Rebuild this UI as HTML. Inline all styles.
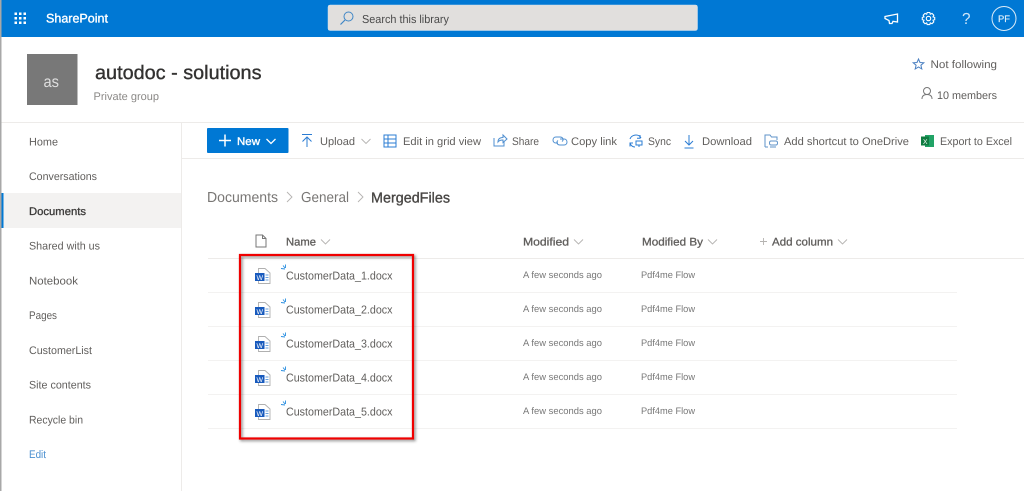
<!DOCTYPE html>
<html><head><meta charset="utf-8"><title>SharePoint</title>
<style>
html,body{margin:0;padding:0;background:#fff;width:1024px;height:491px;overflow:hidden}
svg{display:block;filter:blur(.35px)}
text{font-family:"Liberation Sans",sans-serif;font-size:11px;fill:#605e5c;dominant-baseline:alphabetic;text-rendering:geometricPrecision}
.s{font-size:9.500px;fill:#777}
.h{fill:#605e5c;font-size:11px;stroke:#605e5c;stroke-width:.3px}
.f{fill:#605e5c;font-size:11.500px}
.ic{fill:none;stroke:#2b7cd3;stroke-width:1}
.g{fill:none;stroke:#b5b3b1;stroke-width:.9}
.w{fill:none;stroke:#fff;stroke-width:1}
</style></head><body>
<svg width="1024" height="491" viewBox="0 0 1024 491" xmlns="http://www.w3.org/2000/svg">
<rect width="1024" height="491" fill="#fff"/>
<rect x="0" y="0" width="1.5" height="491" fill="#a8a8a8"/>
<rect x="1.500" y="0" width="1022.500" height="37" fill="#0078d4"/>
<g fill="#fff"><rect x="14.500" y="12.500" width="2.500" height="2.500"/><rect x="19" y="12.500" width="2.500" height="2.500"/><rect x="23.500" y="12.500" width="2.500" height="2.500"/><rect x="14.500" y="17" width="2.500" height="2.500"/><rect x="19" y="17" width="2.500" height="2.500"/><rect x="23.500" y="17" width="2.500" height="2.500"/><rect x="14.500" y="21.500" width="2.500" height="2.500"/><rect x="19" y="21.500" width="2.500" height="2.500"/><rect x="23.500" y="21.500" width="2.500" height="2.500"/></g>
<text x="46" y="22.500" textLength="62" lengthAdjust="spacingAndGlyphs" style="font-size:12.500px;fill:#fff;stroke:#fff;stroke-width:.35px">SharePoint</text>
<rect x="328" y="5" width="369.500" height="25.500" rx="2" fill="#e1dfdd" stroke="#cfe0ee" stroke-width=".5"/>
<circle cx="348.500" cy="16.500" r="4.500" fill="none" stroke="#3f86c6" stroke-width="1"/><path d="M345 20L340.500 24.500" stroke="#3f86c6" stroke-width="1.200" fill="none"/>
<text x="362" y="23" textLength="87" lengthAdjust="spacingAndGlyphs" style="fill:#4a4a4a;font-size:11.500px">Search this library</text>
<path d="M885 16.500L897.500 14V22L893 21.300 892 23.500H889.500L889 20.500 885 18.500Z" fill="none" stroke="#fff" stroke-width="1.300"/>
<g fill="none" stroke="#fff" stroke-width="1.100"><circle cx="928.500" cy="18.500" r="2.200"/><path d="M927.200 12.500H929.800L930.300 14.200 932 13.400 933.800 15.200 933 16.900 934.700 17.400V19.700L933 20.200 933.800 21.900 932 23.700 930.300 22.900 929.800 24.600H927.200L926.700 22.900 925 23.700 923.200 21.900 924 20.200 922.300 19.700V17.400L924 16.900 923.200 15.200 925 13.400 926.700 14.200Z"/></g>
<text x="962" y="24" textLength="8.500" lengthAdjust="spacingAndGlyphs" style="font-size:16px;fill:#cfe6f8">?</text>
<circle cx="1004" cy="18.500" r="12" fill="none" stroke="#dcecf8" stroke-width="1"/>
<text x="998" y="22" textLength="12" lengthAdjust="spacingAndGlyphs" style="font-size:9.500px;fill:#e8f3fb;stroke:#e8f3fb;stroke-width:.15px">PF</text>
<rect x="27" y="54" width="50.500" height="51" fill="#787878"/>
<text x="43.500" y="87" textLength="15.500" lengthAdjust="spacingAndGlyphs" style="font-size:16px;fill:#dedede">as</text>
<text x="95" y="79" textLength="166.500" lengthAdjust="spacingAndGlyphs" style="font-size:19.500px;fill:#323130;stroke:#323130;stroke-width:.35px">autodoc - solutions</text>
<text x="93.500" y="100" textLength="65.500" lengthAdjust="spacingAndGlyphs" style="fill:#8a8886">Private group</text>
<path d="M918.500 59L920 62.500 923.800 62.800 920.900 65.200 921.800 69 918.500 67 915.200 69 916.100 65.200 913.200 62.800 917 62.500Z" fill="none" stroke="#4a7fc1" stroke-width="1"/>
<text x="930.500" y="68" textLength="66.500" lengthAdjust="spacingAndGlyphs">Not following</text>
<circle cx="927" cy="91" r="3.500" fill="none" stroke="#777" stroke-width="1"/><path d="M922 99C922 96 924 94.500 927 94.500S932 96 932 99" fill="none" stroke="#777" stroke-width="1"/>
<text x="937" y="99" textLength="60" lengthAdjust="spacingAndGlyphs">10 members</text>
<rect x="1.500" y="122" width="1022.500" height="1" fill="#edebe9"/>
<rect x="181" y="123" width="1" height="368" fill="#edebe9"/>
<rect x="1.500" y="193" width="179.500" height="35" fill="#f3f2f1"/>
<rect x="1.500" y="193" width="2" height="35" fill="#0078d4"/>
<text x="29" y="145.500" textLength="29" lengthAdjust="spacingAndGlyphs">Home</text>
<text x="29" y="180" textLength="68" lengthAdjust="spacingAndGlyphs">Conversations</text>
<text x="29" y="215" textLength="57" lengthAdjust="spacingAndGlyphs" style="fill:#3b3a39;stroke:#3b3a39;stroke-width:.3px">Documents</text>
<text x="29" y="249.500" textLength="71" lengthAdjust="spacingAndGlyphs">Shared with us</text>
<text x="29" y="284.500" textLength="49" lengthAdjust="spacingAndGlyphs">Notebook</text>
<text x="29" y="319" textLength="28" lengthAdjust="spacingAndGlyphs">Pages</text>
<text x="29" y="354" textLength="63" lengthAdjust="spacingAndGlyphs">CustomerList</text>
<text x="29" y="388.500" textLength="62" lengthAdjust="spacingAndGlyphs">Site contents</text>
<text x="29" y="423.500" textLength="54" lengthAdjust="spacingAndGlyphs">Recycle bin</text>
<text x="29" y="458" textLength="17" lengthAdjust="spacingAndGlyphs" style="fill:#4a8fd0">Edit</text>
<rect x="182" y="158" width="842" height="1" fill="#edebe9"/>
<rect x="207" y="128" width="81.500" height="25" rx="1" fill="#0078d4"/>
<path d="M219 140.500H231M225 134.500V146.500" stroke="#fff" stroke-width="1.500"/>
<text x="237" y="145" textLength="23" lengthAdjust="spacingAndGlyphs" style="fill:#fff;stroke:#fff;stroke-width:.35px">New</text>
<path d="M266.500 139L271 143.500 275.500 139" class="w" style="stroke-width:1.300"/>
<path d="M302 134.500H312M307 147V137M302.500 141.500L307 137 311.500 141.500" class="ic"/>
<text x="320" y="145" textLength="35" lengthAdjust="spacingAndGlyphs">Upload</text>
<path d="M361.500 139L366 143.500 370.500 139" class="g"/>
<path d="M384 135H396V147H384ZM384 139H396M384 143H396M388 135V147" class="ic"/>
<text x="403" y="145" textLength="78" lengthAdjust="spacingAndGlyphs">Edit in grid view</text>
<path d="M494 138V146H504V142M498 142C498 139 500 137.500 503 137.500V135L507 139 503 142.500V140C501 140 499 140.500 498 142Z" class="ic" style="stroke:#4f8fd0"/>
<text x="512" y="145" textLength="27" lengthAdjust="spacingAndGlyphs">Share</text>
<path d="M558 143H556C552 143 552 137 556 137H560C563 137 564 140 562 141.500M560 139H564C568 139 568 145 564 145H560C557 145 556 142 558 140.500" class="ic" style="stroke:#4f8fd0"/>
<text x="571" y="145" textLength="46" lengthAdjust="spacingAndGlyphs">Copy link</text>
<path d="M630 139C631 136 634 135 636 135S640 136 641 138M640 135V138.300H637M630 143C631 146 633 147 635 147M630 146.500V143H633M636 141H642V145H636ZM639 145V147" class="ic"/>
<text x="648" y="145" textLength="23" lengthAdjust="spacingAndGlyphs">Sync</text>
<path d="M689 135V145M685 141L689 145 693 141M684.500 148H693.500" class="ic"/>
<text x="702" y="145" textLength="50" lengthAdjust="spacingAndGlyphs">Download</text>
<path d="M765 147V135H770L771.500 137H777V140M765 147H768M771 141H776C778 141 778 145 776 145H771C769 145 769 141 771 141ZM770 147H776" class="ic" style="stroke:#5f93c9"/>
<text x="784" y="145" textLength="125" lengthAdjust="spacingAndGlyphs">Add shortcut to OneDrive</text>
<rect x="925" y="135" width="9" height="12" fill="#21a366"/><rect x="921" y="136.500" width="8" height="9" fill="#107c41"/>
<text x="923" y="144" textLength="4.500" lengthAdjust="spacingAndGlyphs" style="font-size:7px;fill:#fff">X</text>
<text x="940" y="145" textLength="72" lengthAdjust="spacingAndGlyphs">Export to Excel</text>
<text x="207" y="202" textLength="71" lengthAdjust="spacingAndGlyphs" style="font-size:14.500px;fill:#797775">Documents</text>
<path d="M287 192L292 197 287 202" class="g"/>
<text x="301" y="202" textLength="48" lengthAdjust="spacingAndGlyphs" style="font-size:14.500px;fill:#797775">General</text>
<path d="M358 192L363 197 358 202" class="g"/>
<text x="371" y="202.500" textLength="79" lengthAdjust="spacingAndGlyphs" style="font-size:14.500px;fill:#484644;stroke:#484644;stroke-width:.35px">MergedFiles</text>
<path d="M256 235H262.500L266 238.500V247H256ZM262.500 235V238.500H266" fill="none" stroke="#777" stroke-width="1"/>
<text x="286" y="245.500" textLength="30" lengthAdjust="spacingAndGlyphs" class="h">Name</text>
<path d="M321 239.500L325.500 244 330 239.500" class="g"/>
<text x="523" y="245.500" textLength="46" lengthAdjust="spacingAndGlyphs" class="h">Modified</text>
<path d="M574 239.500L578.500 244 583 239.500" class="g"/>
<text x="642" y="245.500" textLength="61" lengthAdjust="spacingAndGlyphs" class="h">Modified By</text>
<path d="M708 239.500L712.500 244 717 239.500" class="g"/>
<path d="M760 241.500H767M763.500 238V245" class="g"/>
<text x="772" y="245.500" textLength="61" lengthAdjust="spacingAndGlyphs" class="h">Add column</text>
<path d="M838 239.500L842.500 244 847 239.500" class="g"/>
<g fill="#f3f2f1"><rect x="208" y="258" width="816" height="1" fill="#edebe9"/><rect x="208" y="292" width="749" height="1"/><rect x="208" y="326" width="749" height="1"/><rect x="208" y="360" width="749" height="1"/><rect x="208" y="394" width="749" height="1"/><rect x="208" y="428" width="749" height="1"/></g>
<defs>
<g id="w">
<path d="M258.500 268.500H265L270 273V283.500H258.500Z" fill="#fff" stroke="#b0b0b0" stroke-width=".9"/>
<path d="M265.500 275H268.500M265.500 277.500H268.500M265.500 280H268.500" stroke="#6aa0dc" stroke-width="1"/>
<rect x="255" y="273" width="9.500" height="8" fill="#185abd"/>
<text x="256.500" y="279.800" textLength="6.500" lengthAdjust="spacingAndGlyphs" style="font-size:7px;fill:#fff">W</text>
<path d="M281 268.500L285 269M285.500 268L285.500 264.500M283 265.500L285 268" fill="none" stroke="#2b8fe0" stroke-width=".9"/>
</g>
<filter id="sh" x="-5%" y="-5%" width="110%" height="110%"><feGaussianBlur stdDeviation="1.200"/></filter>
</defs>
<use href="#w"/>
<use href="#w" y="34"/>
<use href="#w" y="68"/>
<use href="#w" y="102"/>
<use href="#w" y="136"/>
<text x="286" y="279.500" textLength="106.500" lengthAdjust="spacingAndGlyphs" class="f">CustomerData_1.docx</text>
<text x="286" y="313.500" textLength="106.500" lengthAdjust="spacingAndGlyphs" class="f">CustomerData_2.docx</text>
<text x="286" y="347.500" textLength="106.500" lengthAdjust="spacingAndGlyphs" class="f">CustomerData_3.docx</text>
<text x="286" y="381.500" textLength="106.500" lengthAdjust="spacingAndGlyphs" class="f">CustomerData_4.docx</text>
<text x="286" y="415.500" textLength="106.500" lengthAdjust="spacingAndGlyphs" class="f">CustomerData_5.docx</text>
<text class="s" x="523" y="278" textLength="79" lengthAdjust="spacingAndGlyphs">A few seconds ago</text>
<text class="s" x="523" y="312" textLength="79" lengthAdjust="spacingAndGlyphs">A few seconds ago</text>
<text class="s" x="523" y="346" textLength="79" lengthAdjust="spacingAndGlyphs">A few seconds ago</text>
<text class="s" x="523" y="380" textLength="79" lengthAdjust="spacingAndGlyphs">A few seconds ago</text>
<text class="s" x="523" y="414" textLength="79" lengthAdjust="spacingAndGlyphs">A few seconds ago</text>
<text class="s" x="641" y="278" textLength="54" lengthAdjust="spacingAndGlyphs">Pdf4me Flow</text>
<text class="s" x="641" y="312" textLength="54" lengthAdjust="spacingAndGlyphs">Pdf4me Flow</text>
<text class="s" x="641" y="346" textLength="54" lengthAdjust="spacingAndGlyphs">Pdf4me Flow</text>
<text class="s" x="641" y="380" textLength="54" lengthAdjust="spacingAndGlyphs">Pdf4me Flow</text>
<text class="s" x="641" y="414" textLength="54" lengthAdjust="spacingAndGlyphs">Pdf4me Flow</text>
<rect x="241.500" y="256.500" width="173" height="183.500" fill="none" stroke="#333" stroke-opacity=".5" stroke-width="2.500" filter="url(#sh)"/>
<rect x="240" y="255" width="173" height="183.500" fill="none" stroke="#f00000" stroke-width="2.200"/>
</svg>
</body></html>
